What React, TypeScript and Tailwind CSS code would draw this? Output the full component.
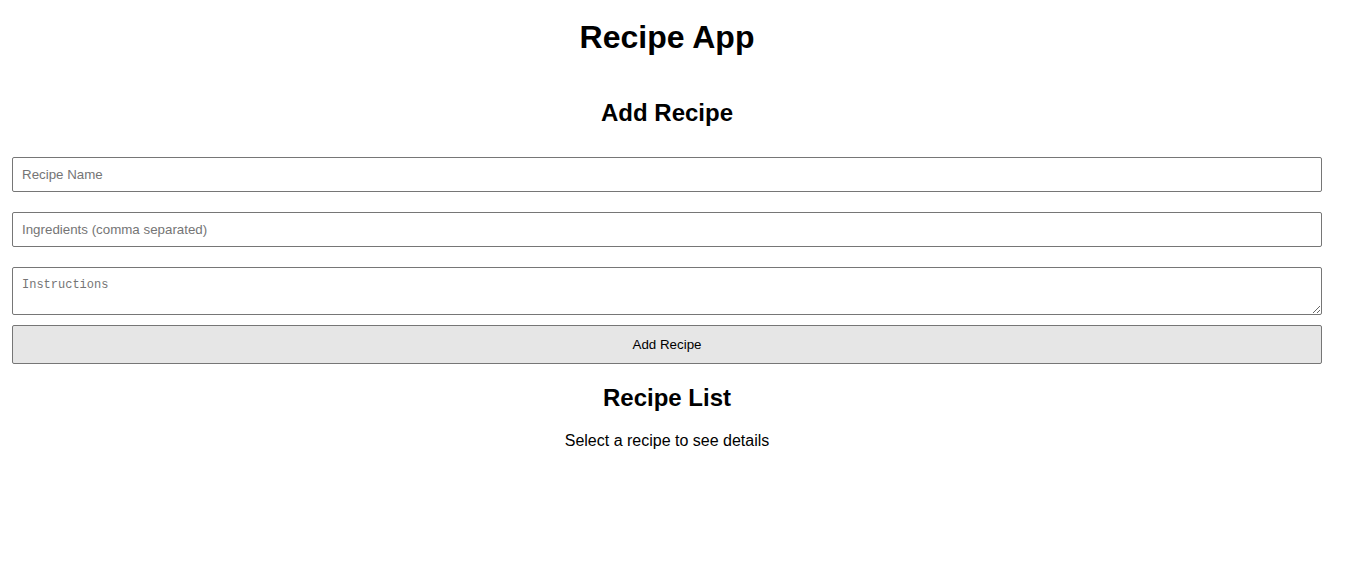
import React from "react";

export default function App() {
  return (
    <div className="min-h-[567px] bg-white pl-[12px] pr-[25px] pt-[19px] font-['Liberation_Sans',Arial,sans-serif] text-black">
      <h1 className="text-center text-[32px] font-bold leading-[37px]">Recipe App</h1>
      <h2 className="mt-[43px] text-center text-[24px] font-bold leading-[28px]">Add Recipe</h2>
      <form className="mt-[30px] flex flex-col" onSubmit={(e) => e.preventDefault()}>
        <input
          type="text"
          placeholder="Recipe Name"
          className="block h-[35px] w-full rounded-[2px] border border-[#767676] bg-white px-[9px] text-[13.33px] leading-[15px] outline-none placeholder:text-[#757575]"
        />
        <input
          type="text"
          placeholder="Ingredients (comma separated)"
          className="mt-[20px] block h-[35px] w-full rounded-[2px] border border-[#767676] bg-white px-[9px] text-[13.33px] leading-[15px] outline-none placeholder:text-[#757575]"
        />
        <textarea
          placeholder="Instructions"
          className="mt-[20px] block h-[48px] w-full resize-y rounded-[2px] border border-[#767676] bg-white px-[9px] pt-[10px] font-['Liberation_Mono',monospace] text-[12px] leading-[15px] outline-none placeholder:text-[#757575]"
        />
        <button
          type="submit"
          className="mt-[10px] block h-[39px] w-full rounded-[2px] border border-[#767676] bg-[#e6e6e6] text-[13.33px] leading-[15px] text-black"
        >
          Add Recipe
        </button>
      </form>
      <h2 className="mt-[20px] text-center text-[24px] font-bold leading-[28px]">Recipe List</h2>
      <p className="mt-[20px] text-center text-[16px] leading-[18px]">Select a recipe to see details</p>
    </div>
  );
}
